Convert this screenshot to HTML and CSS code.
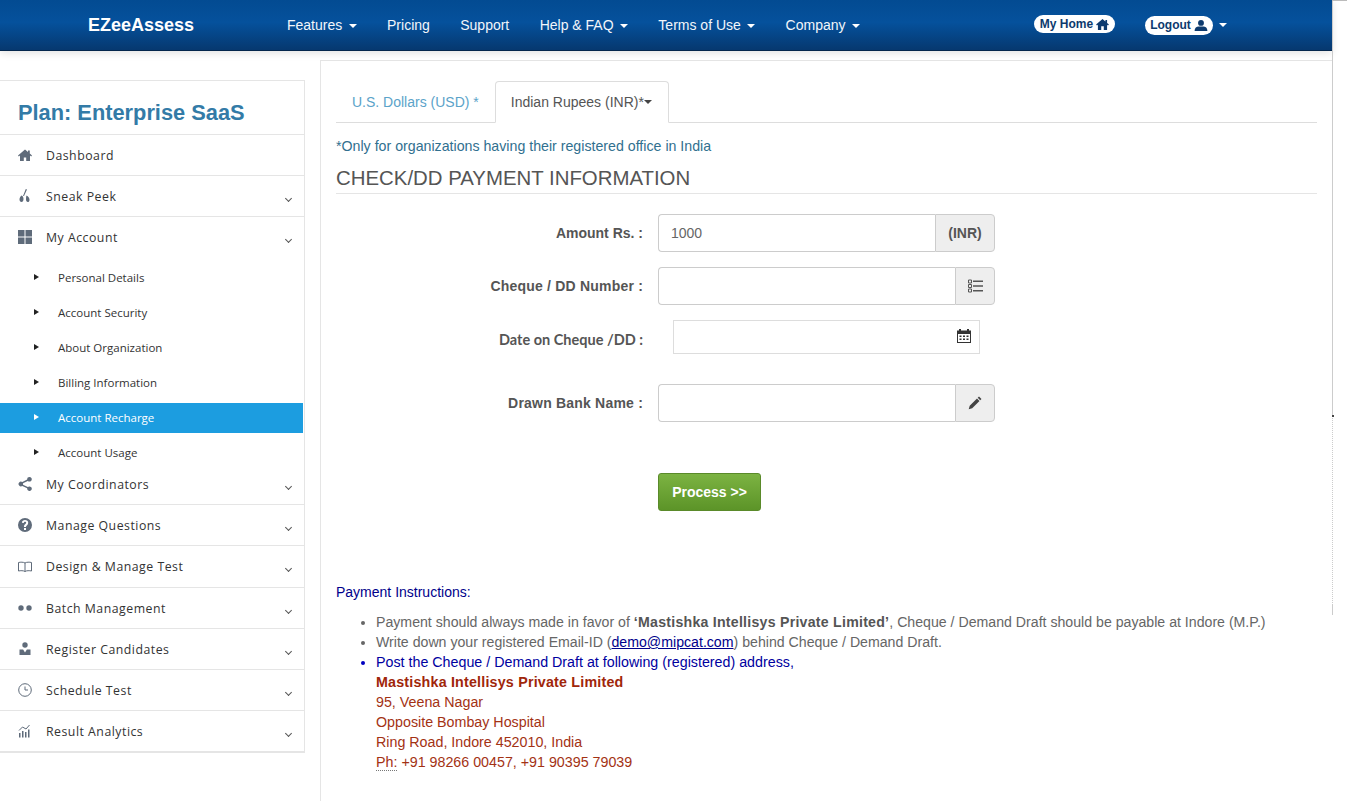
FILE: index.html
```html
<!DOCTYPE html>
<html lang="en">
<head>
  <meta charset="UTF-8" />
  <meta name="viewport" content="width=device-width, initial-scale=1" />
  <title>EZeeAssess - Account Recharge</title>
  <link rel="stylesheet" href="styles.css">
</head>
<body>
  <div id="page">
    <div id="top-bar">
      <a class="brand" href="#">EZeeAssess</a>
      <div class="nav">
        <a href="#">Features <i class="caret"></i></a>
        <a href="#">Pricing</a>
        <a href="#">Support</a>
        <a href="#">Help &amp; FAQ <i class="caret"></i></a>
        <a href="#">Terms of Use <i class="caret"></i></a>
        <a href="#">Company <i class="caret"></i></a>
      </div>
      <div class="user-nav">
        <a class="pill pill-home" href="#">My Home
          <svg width="13" height="11" viewBox="0 0 14 12"><path d="M7 0 0 6l1 1 1-.8V12h3.600V8h2.800v4H12V6.200l1 .8 1-1-2-1.700V1h-1.800v1.800z" fill="#0d3a6e"/></svg>
        </a>
        <a class="pill pill-logout" href="#">Logout
          <svg width="14" height="11" viewBox="0 0 14 12"><circle cx="7" cy="3.200" r="3.200" fill="#0d3a6e"/><path d="M0 12c0-3.500 2-5 4.500-5h5C12 7 14 8.500 14 12z" fill="#0d3a6e"/></svg>
        </a>
        <i class="caret"></i>
      </div>
    </div>

    <div id="content">
      <div id="sidebar">
        <h2 class="plan-title">Plan: Enterprise SaaS</h2>
        <ul class="menu">
          <li class="menu-item"><a href="#">
            <svg class="menu-icon" viewBox="0 0 14 14"><path d="M7 1.500 0 7.500l.8 1L2 7.500V13h3.800V9.500h2.400V13H12V7.500l1.200 1 .8-1-2.200-1.900V2.500H10v1.500z"/></svg>
            <span>Dashboard</span></a></li>
          <li class="menu-item has-sub"><a href="#">
            <svg class="menu-icon" viewBox="0 0 14 14"><path d="M7.800 0 9 .5 6 7H5zM3.500 6.500c1.300.6 2 1.800 2 3.500 0 1.800-.8 3-2 3s-2-1-2-2.500c0-1.600.9-3 2-4zM8.500 6.500c1.800 1 3 2.400 3 4.200 0 1.500-.7 2.300-1.700 2.300S8 12 8 10.500c0-1.500.1-3 .5-4z"/></svg>
            <span>Sneak Peek</span></a></li>
          <li class="menu-item has-sub open"><a href="#">
            <svg class="menu-icon" viewBox="0 0 14 14"><path d="M0 0h6.500v6.500H0zM7.500 0H14v6.500H7.500zM0 7.500h6.500V14H0zM7.500 7.500H14V14H7.500z"/></svg>
            <span>My Account</span></a></li>
          <li class="sub-menu">
            <a href="#">Personal Details</a>
            <a href="#">Account Security</a>
            <a href="#">About Organization</a>
            <a href="#">Billing Information</a>
            <a class="active" href="#">Account Recharge</a>
            <a href="#">Account Usage</a>
          </li>
          <li class="menu-item has-sub"><a href="#">
            <svg class="menu-icon" viewBox="0 0 14 14"><path d="M11.500 0a2.300 2.300 0 1 1-1.700 3.900L5 6.300a2.600 2.600 0 0 1 0 1.400l4.800 2.400a2.300 2.300 0 1 1-.6 1.200L4.300 9A2.400 2.400 0 1 1 4.300 5l4.900-2.400A2.300 2.300 0 0 1 11.500 0z"/></svg>
            <span>My Coordinators</span></a></li>
          <li class="menu-item has-sub"><a href="#">
            <svg class="menu-icon" viewBox="0 0 14 14"><path fill-rule="evenodd" d="M7 0a7 7 0 1 1 0 14A7 7 0 0 1 7 0zM6 10v2h2v-2zM7 2C5.300 2 4 3 3.900 4.700l1.900.3C5.900 4.300 6.300 3.800 7 3.800s1.200.4 1.200 1c0 1.100-2.200 1.400-2.200 3.700v.6h2v-.4c0-1.300 2.200-1.700 2.200-4C10.200 3 8.800 2 7 2z"/></svg>
            <span>Manage Questions</span></a></li>
          <li class="menu-item has-sub item-tall"><a href="#">
            <svg class="menu-icon" viewBox="0 0 14 14"><path d="M.5 2.500C2.500 2 5.500 2 7 3c1.500-1 4.500-1 6.500-.5v8.500C11.500 10.500 8.500 10.500 7 11.500 5.500 10.500 2.500 10.500.5 11zM7 3v8.500" fill="none" stroke="#5f6b7a" stroke-width="1"/></svg>
            <span>Design &amp; Manage Test</span></a></li>
          <li class="menu-item has-sub"><a href="#">
            <svg class="menu-icon" viewBox="0 0 14 14"><circle cx="3" cy="7" r="2.700"/><circle cx="11" cy="7" r="2.700"/></svg>
            <span>Batch Management</span></a></li>
          <li class="menu-item has-sub"><a href="#">
            <svg class="menu-icon" viewBox="0 0 14 14"><circle cx="7" cy="3" r="2.700"/><path d="M1.500 13V7.500h3.600L7 10.500l1.900-3h3.600V13z"/></svg>
            <span>Register Candidates</span></a></li>
          <li class="menu-item has-sub"><a href="#">
            <svg class="menu-icon" viewBox="0 0 14 14"><circle cx="7" cy="7" r="6.300" fill="none" stroke="#5f6b7a" stroke-width="1"/><path d="M7 3.500V7h3" fill="none" stroke="#5f6b7a" stroke-width="1"/></svg>
            <span>Schedule Test</span></a></li>
          <li class="menu-item has-sub"><a href="#">
            <svg class="menu-icon" viewBox="0 0 14 14"><path d="M1 9h1.500v4.500H1zM4 7h1.500v6.500H4zM7 8h1.500v5.500H7zM10 5.500h1.500v8H10z"/><path d="M1 6.500 4.500 3 8 5l3.500-4" fill="none" stroke="#5f6b7a" stroke-width="1"/></svg>
            <span>Result Analytics</span></a></li>
        </ul>
      </div>

      <div id="main">
        <div class="tabs">
          <a class="tab" href="#">U.S. Dollars (USD) *</a>
          <a class="tab tab-active" href="#">Indian Rupees (INR)*<i class="caret caret-dark"></i></a>
        </div>
        <p class="india-note">*Only for organizations having their registered office in India</p>
        <h3 class="section-title">CHECK/DD PAYMENT INFORMATION</h3>

        <div class="form">
          <div class="form-row">
            <label>Amount Rs. :</label>
            <div class="input-group">
              <input class="field" type="text" value="1000" />
              <span class="addon addon-text">(INR)</span>
            </div>
          </div>
          <div class="form-row">
            <label class="label-wide">Cheque / DD Number :</label>
            <div class="input-group">
              <input class="field" type="text" />
              <span class="addon">
                <svg width="15" height="14" viewBox="0 0 15 14"><path d="M.5 1h3v3h-3zM.5 5.500h3v3h-3zM.5 10h3v3h-3z" fill="none" stroke="#555"/><path d="M5 1.500h10v1.400H5zM5 6.300h10v1.400H5zM5 11h10v1.400H5z" fill="#555"/></svg>
              </span>
            </div>
          </div>
          <div class="form-row date-row">
            <label class="label-date">Date on Cheque /DD :</label>
            <div class="date-field">
              <svg width="14" height="14" viewBox="0 0 14 14"><path fill-rule="evenodd" d="M0 1.500h2V0h2v1.500h6V0h2v1.500h2V14H0zM1 5v8h12V5z" fill="#333"/><path d="M2.500 6.500h2v1.500h-2zM6 6.500h2v1.500H6zM9.500 6.500h2v1.500h-2zM2.500 9.500h2v1.500h-2zM6 9.500h2v1.500H6zM9.500 9.500h2v1.500h-2z" fill="#333"/></svg>
            </div>
          </div>
          <div class="form-row">
            <label class="label-wide">Drawn Bank Name :</label>
            <div class="input-group">
              <input class="field" type="text" />
              <span class="addon">
                <svg width="14" height="14" viewBox="0 0 14 14"><path d="M11 .5 13.500 3 12.200 4.300 9.700 1.800zM9 2.500l2.500 2.500-7.300 7.300-3.500 1 1-3.500zM2.300 10.200 3.800 11.700 1.800 12.300z" fill="#444"/></svg>
              </span>
            </div>
          </div>
          <div class="form-actions">
            <button class="btn-process" type="button">Process &gt;&gt;</button>
          </div>
        </div>

        <div class="instructions">
          <p class="instructions-title">Payment Instructions:</p>
          <ul>
            <li>Payment should always made in favor of <b>‘Mastishka Intellisys Private Limited’</b>, Cheque / Demand Draft should be payable at Indore (M.P.)</li>
            <li>Write down your registered Email-ID (<a href="#">demo@mipcat.com</a>) behind Cheque / Demand Draft.</li>
            <li class="post">Post the Cheque / Demand Draft at following (registered) address,
              <address>
                <b>Mastishka Intellisys Private Limited</b><br>
                95, Veena Nagar<br>
                Opposite Bombay Hospital<br>
                Ring Road, Indore 452010, India<br>
                <abbr>Ph:</abbr> +91 98266 00457, +91 90395 79039
              </address>
            </li>
          </ul>
        </div>
      </div>
    </div>
  </div>

  <div id="page-edge"></div>
</body>
</html>
```

FILE: styles.css
```css
:root {
  --line: #e5e5e5;
  --icon: #5f6b7a;
  --navy: #0d3a6e;
}
html, body {
  height: 100%;
}
body {
  margin: 0;
  overflow: hidden;
  background: #fff;
  font-family: "Liberation Sans", Arial, sans-serif;
  font-size: 14px;
  color: #555;
}
a {
  text-decoration: none;
}
#page {
  width: 1332px;
  height: 801px;
  display: flex;
  flex-direction: column;
}

/* top bar */
#top-bar {
  flex: none;
  height: 50px;
  display: flex;
  align-items: center;
  padding: 0 105px 0 88px;
  background: linear-gradient(to bottom, #034b92 0%, #05519c 45%, #06386f 100%);
  border-bottom: 1px solid #04264c;
  box-shadow: 0 2px 8px rgba(0,0,0,0.12);
  position: relative;
}
.brand {
  width: 199px;
  font-size: 18px;
  font-weight: bold;
  color: #fff;
}
.nav {
  display: flex;
  gap: 30.4px;
}
.nav a {
  color: #f2f6fb;
  font-size: 14px;
}
.caret {
  display: inline-block;
  width: 0;
  height: 0;
  margin-left: 2.5px;
  vertical-align: middle;
  border-top: 4px solid #fff;
  border-left: 4px solid transparent;
  border-right: 4px solid transparent;
}
.caret-dark {
  border-top-color: #444;
  margin-left: 0;
}
.user-nav {
  margin-left: auto;
  display: flex;
  align-items: center;
}
.pill {
  display: flex;
  align-items: center;
  justify-content: center;
  gap: 3px;
  background: #fff;
  border-radius: 10px;
  color: var(--navy);
  font-size: 12px;
  font-weight: bold;
}
.pill-home {
  width: 81px;
  height: 18px;
  margin: -2px 30px 0 0;
}
.pill-logout {
  width: 68px;
  height: 19px;
  margin-right: 3.5px;
}

#content {
  flex: 1;
  min-height: 0;
  display: flex;
  align-items: flex-start;
}

/* sidebar */
#sidebar {
  flex: none;
  width: 304px;
  margin: 29px 15px 0 0;
  background: #fff;
  border-top: 1px solid var(--line);
  border-right: 1px solid var(--line);
  border-bottom: 2px solid var(--line);
}
.plan-title {
  margin: 0;
  height: 53px;
  line-height: 63px;
  padding-left: 18px;
  font-size: 21.8px;
  font-weight: bold;
  color: #337ba7;
  border-bottom: 1px solid var(--line);
}
.menu {
  list-style: none;
  margin: 0;
  padding: 0;
}
.menu-item a {
  height: 40px;
  display: flex;
  align-items: center;
  padding-left: 18px;
  font-family: "Open Sans", sans-serif;
  font-size: 12.3px;
  letter-spacing: 0.5px;
  color: #333;
  position: relative;
}
.menu-item {
  border-bottom: 1px solid var(--line);
}
.menu-item.open, .menu-item:last-child {
  border-bottom: 0;
}
.item-tall a {
  height: 41px;
}
.menu-icon {
  width: 14px;
  height: 14px;
  margin-right: 14px;
  fill: var(--icon);
}
.has-sub a::after {
  content: "";
  position: absolute;
  right: 13px;
  top: 20px;
  width: 4px;
  height: 4px;
  border-right: 1px solid #555;
  border-bottom: 1px solid #555;
  transform: rotate(45deg);
}
.sub-menu {
  display: flex;
  flex-direction: column;
  gap: 5px;
  padding-top: 6px;
  margin-bottom: -4px;
}
.sub-menu a {
  height: 30px;
  box-sizing: border-box;
  margin-right: 1px;
  display: flex;
  align-items: center;
  padding: 0 0 2px 58px;
  font-family: "Open Sans", sans-serif;
  font-size: 11.5px;
  color: #333;
  position: relative;
}
.sub-menu a::before {
  content: "";
  position: absolute;
  left: 34px;
  top: 11px;
  border-left: 5px solid #222;
  border-top: 3px solid transparent;
  border-bottom: 3px solid transparent;
}
.sub-menu a.active {
  background: #1c9de0;
  color: #fff;
}
.sub-menu a.active::before {
  border-left-color: #fff;
}

/* main panel */
#main {
  flex: 1;
  height: 741px;
  margin-top: 9px;
  box-sizing: border-box;
  padding: 20px 15px 0;
  border-top: 1px solid var(--line);
  border-left: 1px solid var(--line);
}
.tabs {
  display: flex;
  height: 41px;
  border-bottom: 1px solid #ddd;
}
.tab {
  height: 42px;
  box-sizing: border-box;
  display: flex;
  align-items: center;
  padding: 0 15px;
  border: 1px solid transparent;
  border-radius: 4px 4px 0 0;
  color: #5ba3c9;
}
.tab-active {
  width: 174px;
  color: #555;
  background: #fff;
  border-color: #ddd #ddd #fff;
}
.india-note {
  margin: 15px 0 0;
  line-height: 16px;
  font-size: 14.2px;
  color: #31708f;
}
.section-title {
  margin: 12px 0 0;
  padding-bottom: 3px;
  font-size: 20.4px;
  line-height: 24px;
  font-weight: normal;
  color: #555;
  border-bottom: 1px solid #e5e5e5;
}

/* form */
.form {
  padding-top: 20px;
}
.form-row {
  display: flex;
  align-items: center;
  gap: 15px;
  margin-bottom: 15px;
}
.form-row label {
  width: 307px;
  text-align: right;
  font-weight: bold;
  color: #555;
}
.form-row .label-wide {
  letter-spacing: 0.2px;
}
.form-row .label-date {
  padding-top: 4px;
  font-family: Lato, sans-serif;
  font-size: 14.5px;
}
.input-group {
  width: 337px;
  height: 38px;
  display: flex;
}
.field {
  flex: 1;
  min-width: 0;
  box-sizing: border-box;
  padding: 0 12px;
  border: 1px solid #ccc;
  border-right: 0;
  border-radius: 4px 0 0 4px;
  font-family: inherit;
  font-size: 14px;
  color: #666;
  background: #fff;
  outline: none;
}
.addon {
  flex: none;
  width: 38px;
  display: flex;
  align-items: center;
  justify-content: center;
  background: #eee;
  border: 1px solid #ccc;
  border-radius: 0 4px 4px 0;
}
.addon-text {
  width: 58px;
  font-weight: bold;
}
.date-row {
  margin-bottom: 30px;
}
.date-field {
  width: 307px;
  height: 34px;
  box-sizing: border-box;
  margin-left: 15px;
  padding: 0 8px 2px 0;
  display: flex;
  align-items: center;
  justify-content: flex-end;
  border: 1px solid #ddd;
}
.form-actions {
  padding: 36px 0 0 322px;
}
.btn-process {
  width: 103px;
  height: 38px;
  padding: 0;
  border: 1px solid #5a8a2a;
  border-radius: 3px;
  background: linear-gradient(to bottom, #7cb342 0%, #5c9428 100%);
  color: #fff;
  font-family: inherit;
  font-size: 14px;
  font-weight: bold;
}

/* instructions */
.instructions {
  margin-top: 71px;
  line-height: 20px;
}
.instructions-title {
  margin: 0 0 10px;
  color: #00008b;
}
.instructions ul {
  margin: 0;
  padding-left: 40px;
  font-size: 14.15px;
  color: #666;
}
.instructions b {
  letter-spacing: 0.25px;
  color: #555;
}
.instructions a {
  color: #00008b;
  text-decoration: underline;
}
.post {
  font-size: 14.28px;
  color: #0000a0;
}
.post::marker {
  color: #0000c0;
}
address {
  font-style: normal;
  color: #a33214;
}
.instructions address b {
  letter-spacing: 0.2px;
  color: #a0260a;
}
abbr {
  border-bottom: 1px dotted #777;
}

/* thin rule down the right of the page, over the white strip */
#page-edge {
  position: absolute;
  left: 1332px;
  top: 0;
  width: 1px;
  height: 615px;
  background:
    linear-gradient(to bottom, #ccc 0, #ccc 415px, transparent 415px, transparent 605px, #ccc 605px),
    repeating-linear-gradient(to bottom, #ccc 0, #ccc 1px, #fff 1px, #fff 2px);
}
#page-edge::before {
  content: "";
  position: absolute;
  left: 0;
  top: 0;
  width: 15px;
  height: 1px;
  background: #bbb;
}
#page-edge::after {
  content: "";
  position: absolute;
  left: 0;
  top: 415px;
  width: 2px;
  height: 2px;
  background: #444;
}
```
